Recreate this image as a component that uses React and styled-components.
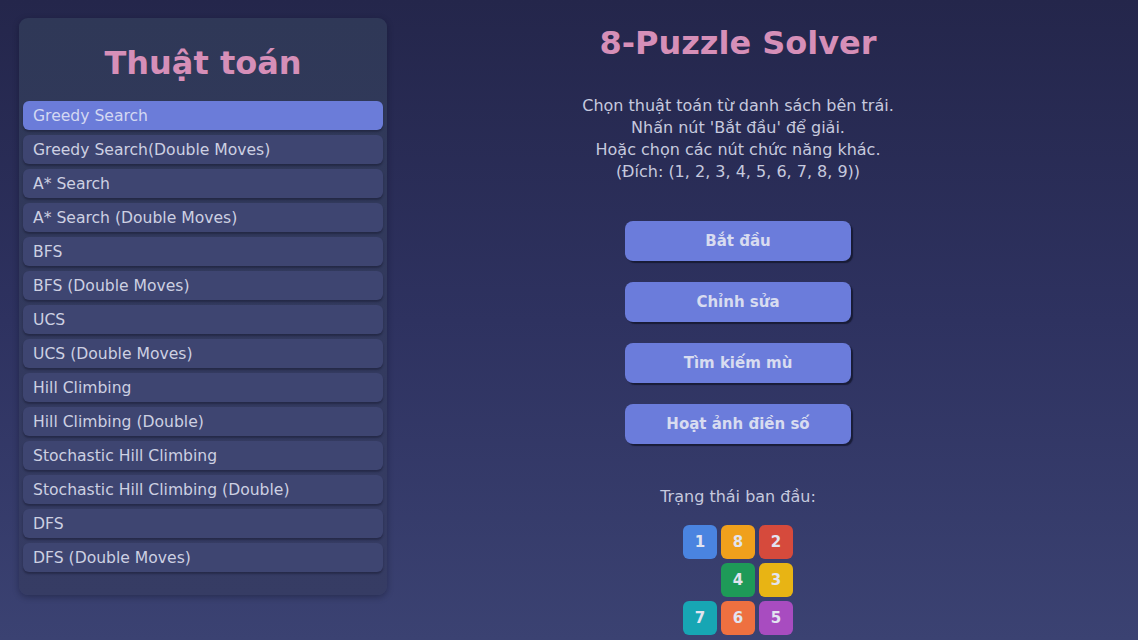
import React from "react";
import styled, { createGlobalStyle } from "styled-components";

const Global = createGlobalStyle`
  html, body { margin: 0; padding: 0; }
  body { font-family: "DejaVu Sans", Verdana, sans-serif; }
  #root { width: 1138px; height: 640px; overflow: hidden; }
`;

const Page = styled.div`
  width: 1138px;
  height: 640px;
  box-sizing: border-box;
  background: linear-gradient(180deg, #24264b 0%, #2e3260 50%, #3b4272 100%);
  display: flex;
  align-items: flex-start;
  padding: 18px 0 0 19px;
`;

const Panel = styled.aside`
  width: 368px;
  height: 577px;
  box-sizing: border-box;
  border-radius: 9px;
  background: linear-gradient(180deg, #2f3857 0%, #333a5f 60%, #363c64 100%);
  box-shadow: 0 2px 6px rgba(10, 12, 30, 0.35);
  padding: 0 4px;
  display: flex;
  flex-direction: column;
`;

const PanelTitle = styled.h2`
  margin: 0;
  height: 83px;
  display: flex;
  align-items: center;
  justify-content: center;
  padding-top: 6px;
  box-sizing: border-box;
  font-size: 32px;
  font-weight: bold;
  color: #d68fb8;
`;

const List = styled.ul`
  list-style: none;
  margin: 0;
  padding: 0;
  display: flex;
  flex-direction: column;
  gap: 5px;
`;

const Item = styled.li`
  height: 29px;
  box-sizing: border-box;
  border-radius: 6px;
  padding: 1px 10px 0;
  display: flex;
  align-items: center;
  font-size: 15.6px;
  color: ${(p) => (p.$active ? "#d3d8f2" : "#cdd0e2")};
  background: ${(p) => (p.$active ? "#6b7cd9" : "#3e4571")};
  box-shadow: 0 2px 2px rgba(20, 22, 45, 0.45);
`;

const Main = styled.main`
  flex: 1;
  padding-right: 49px;
  display: flex;
  flex-direction: column;
  align-items: center;
`;

const Title = styled.h1`
  margin: 6px 0 0;
  font-size: 32px;
  font-weight: bold;
  color: #d68fb8;
  line-height: 38px;
`;

const Info = styled.p`
  margin: 33px 0 0;
  text-align: center;
  font-size: 16px;
  line-height: 22px;
  color: #c6c9de;
`;

const Buttons = styled.div`
  margin-top: 38px;
  display: flex;
  flex-direction: column;
  gap: 21px;
`;

const Button = styled.button`
  width: 226px;
  height: 40px;
  border: none;
  border-radius: 8px;
  background: #6b7cdb;
  color: #d8dcf0;
  font-family: "DejaVu Sans", Verdana, sans-serif;
  font-weight: bold;
  font-size: 15px;
  box-shadow: 2px 2px 1px rgba(18, 20, 42, 0.75);
  cursor: pointer;
`;

const Label = styled.div`
  margin-top: 43px;
  font-size: 16px;
  color: #c6c9de;
`;

const Grid = styled.div`
  margin-top: 19px;
  display: grid;
  grid-template-columns: repeat(3, 34px);
  grid-auto-rows: 34px;
  gap: 4px;
`;

const Tile = styled.div`
  border-radius: 6px;
  background: ${(p) => p.$color || "transparent"};
  color: #e2e4f0;
  font-weight: bold;
  font-size: 15px;
  display: flex;
  align-items: center;
  justify-content: center;
`;

const algorithms = [
  "Greedy Search",
  "Greedy Search(Double Moves)",
  "A* Search",
  "A* Search (Double Moves)",
  "BFS",
  "BFS (Double Moves)",
  "UCS",
  "UCS (Double Moves)",
  "Hill Climbing",
  "Hill Climbing (Double)",
  "Stochastic Hill Climbing",
  "Stochastic Hill Climbing (Double)",
  "DFS",
  "DFS (Double Moves)",
];

const tiles = [
  { n: 1, c: "#4a84e0" },
  { n: 8, c: "#f0a01c" },
  { n: 2, c: "#d64a3c" },
  { n: null, c: null },
  { n: 4, c: "#1e9a58" },
  { n: 3, c: "#e8b414" },
  { n: 7, c: "#17a6b4" },
  { n: 6, c: "#ee7040" },
  { n: 5, c: "#a84cc0" },
];

export default function App() {
  return (
    <>
      <Global />
      <Page>
        <Panel>
          <PanelTitle>Thuật toán</PanelTitle>
          <List>
            {algorithms.map((a, i) => (
              <Item key={a} $active={i === 0}>
                {a}
              </Item>
            ))}
          </List>
        </Panel>
        <Main>
          <Title>8-Puzzle Solver</Title>
          <Info>
            Chọn thuật toán từ danh sách bên trái.
            <br />
            Nhấn nút 'Bắt đầu' để giải.
            <br />
            Hoặc chọn các nút chức năng khác.
            <br />
            (Đích: (1, 2, 3, 4, 5, 6, 7, 8, 9))
          </Info>
          <Buttons>
            <Button>Bắt đầu</Button>
            <Button>Chỉnh sửa</Button>
            <Button>Tìm kiếm mù</Button>
            <Button>Hoạt ảnh điền số</Button>
          </Buttons>
          <Label>Trạng thái ban đầu:</Label>
          <Grid>
            {tiles.map((t, i) => (
              <Tile key={i} $color={t.c}>
                {t.n}
              </Tile>
            ))}
          </Grid>
        </Main>
      </Page>
    </>
  );
}
